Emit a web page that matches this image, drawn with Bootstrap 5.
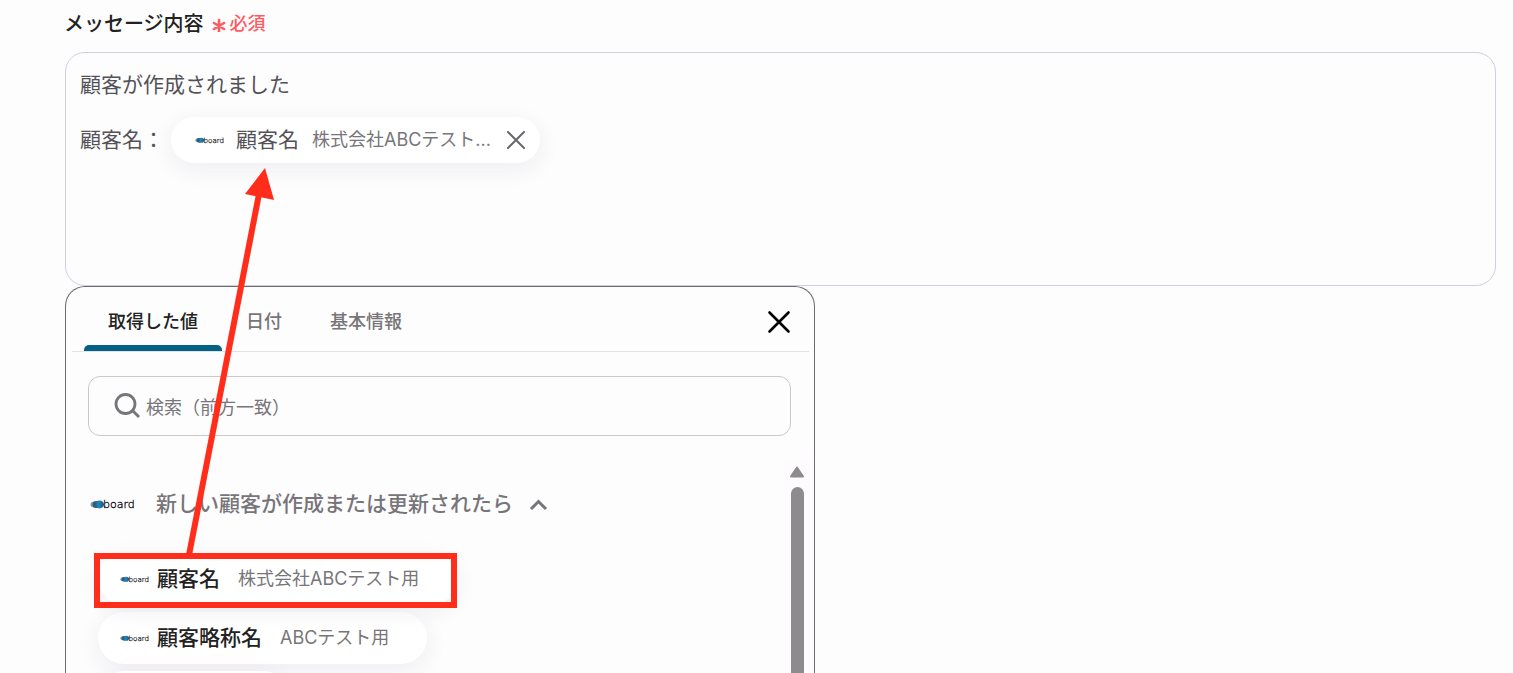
<!DOCTYPE html>
<html lang="ja">
<head>
<meta charset="utf-8">
<meta name="viewport" content="width=device-width, initial-scale=1">
<title>メッセージ内容</title>
<link href="https://cdn.jsdelivr.net/npm/bootstrap@5.3.0/dist/css/bootstrap.min.css" rel="stylesheet">
<style>
  body { background: #fdfdfd; color: #222; font-family: Inter, "Noto Sans CJK JP", sans-serif; font-size: 21px; line-height: 32px; }
  .page { padding: 8px 17px 0 64px; }
  .page > .editor, .page > .picker { margin-left: 1px; }
  .field-title { font-size: 20px; font-weight: 500; }
  .required-tag { color: #ff5a5f; font-size: 18px; font-weight: 500; }
  .editor { height: 234px; margin-top: 12px; padding: 16px 14px; border: 1px solid #ced0de; border-radius: 20px; color: #545258; }
  .editor-row { margin-top: 14px; height: 50px; }
  .token { background: #fff; border-radius: 26px; box-shadow: 0 6px 22px rgba(70, 40, 90, .08); }
  .token-inline { height: 46px; padding: 0 14px 0 24px; margin-left: 7px; color: #545258; }
  .token-inline .token-name { margin-left: 11px; }
  .token-inline .token-value { margin-left: 13px; margin-right: 15px; }
  .token-item { height: 52px; padding: 0 38px 0 22px; color: #222; border: 0; font-weight: 500; }
  .token-item .token-name { margin-left: 7px; }
  .token-item .token-value { margin-left: 18px; }
  .token-next { width: 192px; }
  .token-value { color: #77757a; font-size: 18px; font-weight: 400; }
  .logo-sm { width: 30px; height: 12px; }
  .logo-lg { width: 46px; height: 18px; }
  .plain-btn { background: none; border: 0; padding: 0; }
  .picker { width: 750px; max-width: 100%; border: 1px solid #6d6b70; border-bottom: 0; border-radius: 20px 20px 0 0; background: #fdfdfd; }
  .picker-head { height: 65px; margin: 0 5px 0 6px; padding: 0 16px 0 12px; border-bottom: 1px solid #e3e2e6; }
  .tab-btn { height: 64px; padding: 6px 24px 0; border: 0; background: none; color: #77757a; font-size: 18px; font-weight: 500; position: relative; }
  .tab-btn.active { color: #222; }
  .tab-btn.active::after { content: ""; position: absolute; left: 0; right: 0; bottom: 0; height: 6px; background: #056183; border-radius: 5px 5px 0 0; }
  .search-box { height: 60px; margin: 24px 23px 0 22px; padding: 0 24px; border: 1px solid #c9c8cb; border-radius: 12px; }
  .search-box input { color: #545258; font-size: 18px; border: 0; background: none; outline: 0; padding: 4px 0 0 1px; }
  .search-box input::placeholder { color: #77757a; opacity: 1; }
  .value-list { padding: 28px 0 0 24px; }
  .group-title { color: #77757a; font-weight: 500; }
  .item-stack { margin: 33px 0 0 8px; gap: 7px; }
  .scroll-track { width: 28px; margin-right: 3px; padding: 5px 0 0; background: #fdfbfd; }
  .scroll-thumb { width: 13px; margin-top: 9px; background: #8d8b8e; border-radius: 7px 7px 0 0; }
  .highlight { position: absolute; inset: 0 0 -3px -4px; border: 6px solid #ff2d1a; pointer-events: none; }
  .pointer-arrow { position: absolute; left: 185px; top: 166px; pointer-events: none; z-index: 5; }
</style>
</head>
<body class="vh-100 overflow-hidden">
<svg width="0" height="0" class="position-absolute" aria-hidden="true">
  <defs>
    <linearGradient id="brand" x1="0" x2="1"><stop offset="0" stop-color="#1d5f88"/><stop offset=".4" stop-color="#2b84b5"/><stop offset="1" stop-color="#0c5a94"/></linearGradient>
    <symbol id="board" viewBox="0 0 46 18">
      <ellipse cx="4" cy="9.500" rx="3.500" ry="3" fill="#8f9aa5"/>
      <ellipse cx="6.500" cy="9.500" rx="4" ry="3.500" fill="#2a5f80"/>
      <ellipse cx="9.500" cy="9.500" rx="4.500" ry="3.900" fill="url(#brand)"/>
      <text x="13" y="13" font-family="DejaVu Sans, sans-serif" font-size="11" font-weight="200" fill="#000" stroke="#000" stroke-width=".3">board</text>
    </symbol>
  </defs>
</svg>
<main class="page position-relative d-flex flex-column vh-100">
  <div class="d-flex align-items-center">
    <span class="field-title" id="msg">メッセージ内容</span>
    <span class="required-tag d-flex align-items-center gap-1 ms-2">
      <svg width="14" height="16" viewBox="0 0 14 16" stroke="currentColor" stroke-width="2.600" stroke-linecap="round"><path d="M7 4v12M2 7l10 6M12 7l-10 6"/></svg>必須</span>
  </div>
  <div class="editor flex-shrink-0" role="textbox" aria-multiline="true" aria-labelledby="msg" contenteditable="true" spellcheck="false">
    <div>顧客が作成されました</div>
    <div class="editor-row d-flex align-items-center">
      <span>顧客名：</span>
      <span class="token token-inline d-inline-flex align-items-center" contenteditable="false">
        <svg class="logo-sm"><use href="#board"/></svg>
        <span class="token-name">顧客名</span>
        <span class="token-value">株式会社ABCテスト...</span>
        <button type="button" class="plain-btn d-flex" aria-label="削除"><svg width="20" height="20" viewBox="0 0 20 20" stroke="#69676c" stroke-width="2" stroke-linecap="round"><path d="M2 2l16 16M18 2L2 18"/></svg></button>
      </span>
    </div>
  </div>
  <section class="picker flex-grow-1 d-flex flex-column overflow-hidden">
    <div class="picker-head d-flex align-items-center flex-shrink-0">
      <div class="d-flex me-auto" role="tablist">
        <button type="button" role="tab" class="tab-btn active" aria-selected="true">取得した値</button>
        <button type="button" role="tab" class="tab-btn">日付</button>
        <button type="button" role="tab" class="tab-btn">基本情報</button>
      </div>
      <button type="button" class="plain-btn d-flex pt-1" aria-label="閉じる"><svg width="28" height="28" viewBox="0 0 28 28" stroke="#000" stroke-width="2.600" stroke-linecap="round"><path d="M4.500 5.500l19 19M23.500 5.500L4.500 24.500"/></svg></button>
    </div>
    <div class="search-box d-flex align-items-center flex-shrink-0">
      <label for="q" class="d-flex" aria-label="検索"><svg width="28" height="28" viewBox="0 0 28 28" fill="none" stroke="#77757a" stroke-width="2.800"><circle cx="12.500" cy="12" r="9.500"/><path d="M19 18l7 7"/></svg></label>
      <input id="q" type="text" class="flex-grow-1 ms-1" placeholder="検索（前方一致）">
    </div>
    <div class="d-flex flex-grow-1 mt-4 overflow-hidden">
      <div class="value-list flex-grow-1">
        <button type="button" class="plain-btn group-title d-flex align-items-center" aria-expanded="true">
          <svg class="logo-lg"><use href="#board"/></svg>
          <span class="ms-3 ps-1">新しい顧客が作成または更新されたら</span>
          <svg class="ms-3" width="20" height="20" viewBox="0 0 20 20" fill="none" stroke="#77757a" stroke-width="3"><path d="M2 15L9.500 7.500 17 15"/></svg>
        </button>
        <div class="item-stack d-flex flex-column align-items-start">
          <button type="button" class="token token-item position-relative d-flex align-items-center"><svg class="logo-sm"><use href="#board"/></svg><span class="token-name">顧客名</span><span class="token-value">株式会社ABCテスト用</span><span class="highlight"></span></button>
          <button type="button" class="token token-item d-flex align-items-center"><svg class="logo-sm"><use href="#board"/></svg><span class="token-name">顧客略称名</span><span class="token-value">ABCテスト用</span></button>
          <div class="token token-item token-next"></div>
        </div>
      </div>
      <div class="scroll-track d-flex flex-column align-items-center" aria-hidden="true">
        <svg width="16" height="13" viewBox="0 0 16 13"><path d="M8 2.500L2 11.500h12z" fill="#8d8b8e" stroke="#8d8b8e" stroke-width="2" stroke-linejoin="round"/></svg>
        <div class="scroll-thumb flex-grow-1"></div>
      </div>
    </div>
  </section>
  <svg class="pointer-arrow" width="92" height="390" viewBox="0 0 92 390" aria-hidden="true"><path d="M4 389L74 28" stroke="#ff2d1a" stroke-width="6"/><path d="M80 2L60 28L89 34z" fill="#ff2d1a"/></svg>
</main>
<script src="https://cdn.jsdelivr.net/npm/bootstrap@5.3.0/dist/js/bootstrap.bundle.min.js"></script>
</body>
</html>
